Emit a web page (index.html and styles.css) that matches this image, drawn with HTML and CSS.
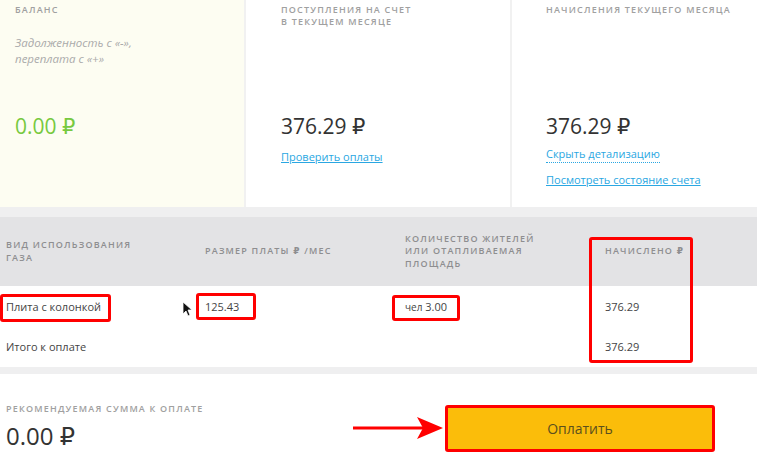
FILE: index.html
```html
<!DOCTYPE html>
<html lang="ru">
<head>
    <meta charset="UTF-8">
    <meta name="viewport" content="width=device-width, initial-scale=1.0">
    <title>Начисления</title>
    <link rel="stylesheet" href="styles.css">
</head>
<body>
    <div class="summary">
        <div class="col col-balance">
            <div class="top">
                <div class="label">Баланс</div>
                <p class="note">Задолженность с «-»,<br>переплата с «+»</p>
            </div>
            <div class="amount green">0.00 ₽</div>
        </div>
        <div class="col col-mid">
            <div class="top">
                <div class="label">Поступления на счет<br>в текущем месяце</div>
            </div>
            <div class="amount">376.29 ₽</div>
            <a class="link link-first" href="#">Проверить оплаты</a>
        </div>
        <div class="col col-right">
            <div class="top">
                <div class="label">Начисления текущего месяца</div>
            </div>
            <div class="amount">376.29 ₽</div>
            <a class="link dotted" href="#">Скрыть детализацию</a>
            <a class="link link-last" href="#">Посмотреть состояние счета</a>
        </div>
    </div>

    <div class="band"></div>

    <div class="table">
        <div class="row head">
            <div class="cell">Вид использования<br>газа</div>
            <div class="cell">Размер платы ₽ /мес</div>
            <div class="cell">Количество жителей<br>или отапливаемая<br>площадь</div>
            <div class="cell">Начислено ₽</div>
        </div>
        <div class="row">
            <div class="cell">Плита с колонкой</div>
            <div class="cell">125.43</div>
            <div class="cell"><span class="unit">чел</span> 3.00</div>
            <div class="cell">376.29</div>
        </div>
        <div class="row">
            <div class="cell">Итого к оплате</div>
            <div class="cell"></div>
            <div class="cell"></div>
            <div class="cell">376.29</div>
        </div>

        <!-- red highlight frames -->
        <div class="hl hl-type"></div>
        <div class="hl hl-price"></div>
        <div class="hl hl-people"></div>
        <div class="hl hl-total"></div>

        <svg class="cursor" width="10" height="16" viewBox="0 0 10 16">
            <path d="M1 1 L1 13 L4 10 L6 15 L8 14 L6 9 L10 9 Z" fill="#111" stroke="#fff" stroke-width="0.8"/>
        </svg>
    </div>

    <div class="band band-bottom"></div>

    <div class="pay">
        <div class="pay-info">
            <div class="label">Рекомендуемая сумма к оплате</div>
            <div class="pay-amount">0.00 ₽</div>
        </div>
        <svg class="arrow" width="91" height="30" viewBox="0 0 91 30">
            <path d="M0 14 L70 14" stroke="#f00" stroke-width="3" stroke-linecap="round"/>
            <path d="M64 3 L90 14 L64 25 L70 14 Z" fill="#f00"/>
        </svg>
        <div class="pay-frame">
            <button class="pay-btn">Оплатить</button>
        </div>
    </div>
</body>
</html>
```

FILE: styles.css
```css
body {
    font-family: "Open Sans", "DejaVu Sans", sans-serif;
    margin: 0;
    background: #fff;
    color: #333;
}
.summary {
    display: flex;
    height: 207px;
}
.col {
    display: flex;
    flex-direction: column;
    box-sizing: border-box;
}
.col-balance {
    width: 246px;
    padding: 4px 15px 0;
    background: #fdfdf2;
    border-right: 2px solid #f1f1f1;
}
.col-mid {
    width: 266px;
    padding: 4px 35px 0;
    border-right: 2px solid #f1f1f1;
}
.col-right {
    flex: 1;
    padding: 4px 10px 0 34px;
}
.top {
    height: 104px;
}
.label {
    font-size: 9px;
    font-weight: 600;
    line-height: 12px;
    letter-spacing: 1.2px;
    text-transform: uppercase;
    color: #a0a0a0;
    white-space: nowrap;
}
.note {
    margin: 19px 0 0;
    font-size: 11.5px;
    font-style: italic;
    line-height: 16px;
    color: #aaa;
}
.amount {
    font-size: 21px;
    line-height: 36px;
    color: #333;
}
.amount.green {
    color: #77c940;
}
.link {
    font-size: 11px;
    line-height: 18px;
    color: #2aa7e2;
    text-decoration: underline;
    align-self: flex-start;
}
.link-first {
    margin-top: 4px;
}
.link.dotted {
    margin-top: 2px;
    text-decoration: none;
    border-bottom: 1px dotted #2aa7e2;
    line-height: 16px;
}
.link-last {
    margin-top: 8px;
}
.band {
    height: 10px;
    background: #efeff0;
}
.band-bottom {
    height: 7px;
}
.table {
    position: relative;
}
.row {
    display: grid;
    grid-template-columns: 199px 200px 200px 1fr;
    height: 40px;
    align-items: center;
    font-size: 11px;
    color: #444;
}
.row + .row + .row {
    height: 41px;
}
.row.head {
    height: 69px;
    background: #e3e3e5;
    font-size: 9px;
    font-weight: 600;
    line-height: 12.5px;
    letter-spacing: 1.2px;
    text-transform: uppercase;
    color: #8e8e90;
}
.cell {
    padding-left: 6px;
}
.unit {
    font-size: 10px;
}
.hl {
    position: absolute;
    border: 3px solid #f00;
    border-radius: 3px;
    box-sizing: border-box;
}
.hl-type {
    left: 0;
    top: 77px;
    width: 111px;
    height: 28px;
}
.hl-price {
    left: 196px;
    top: 76px;
    width: 60px;
    height: 27px;
}
.hl-people {
    left: 392px;
    top: 78px;
    width: 68px;
    height: 26px;
}
.hl-total {
    left: 589px;
    top: 20px;
    width: 104px;
    height: 126px;
}
.cursor {
    position: absolute;
    left: 182px;
    top: 84px;
}
.pay {
    display: flex;
    align-items: flex-start;
}
.pay-info {
    width: 347px;
    padding: 29px 0 0 6px;
}
.pay-amount {
    margin-top: 6px;
    font-size: 24px;
    line-height: 30px;
    color: #333;
}
.arrow {
    margin-top: 40px;
}
.pay-frame {
    margin-top: 31px;
    margin-left: 1px;
    border: 3px solid #f00;
    border-radius: 3px;
}
.pay-btn {
    display: block;
    width: 264px;
    height: 41px;
    border: none;
    background: #fbbd0a;
    color: #5a4f1e;
    font-family: inherit;
    font-size: 14px;
    cursor: pointer;
}
```
